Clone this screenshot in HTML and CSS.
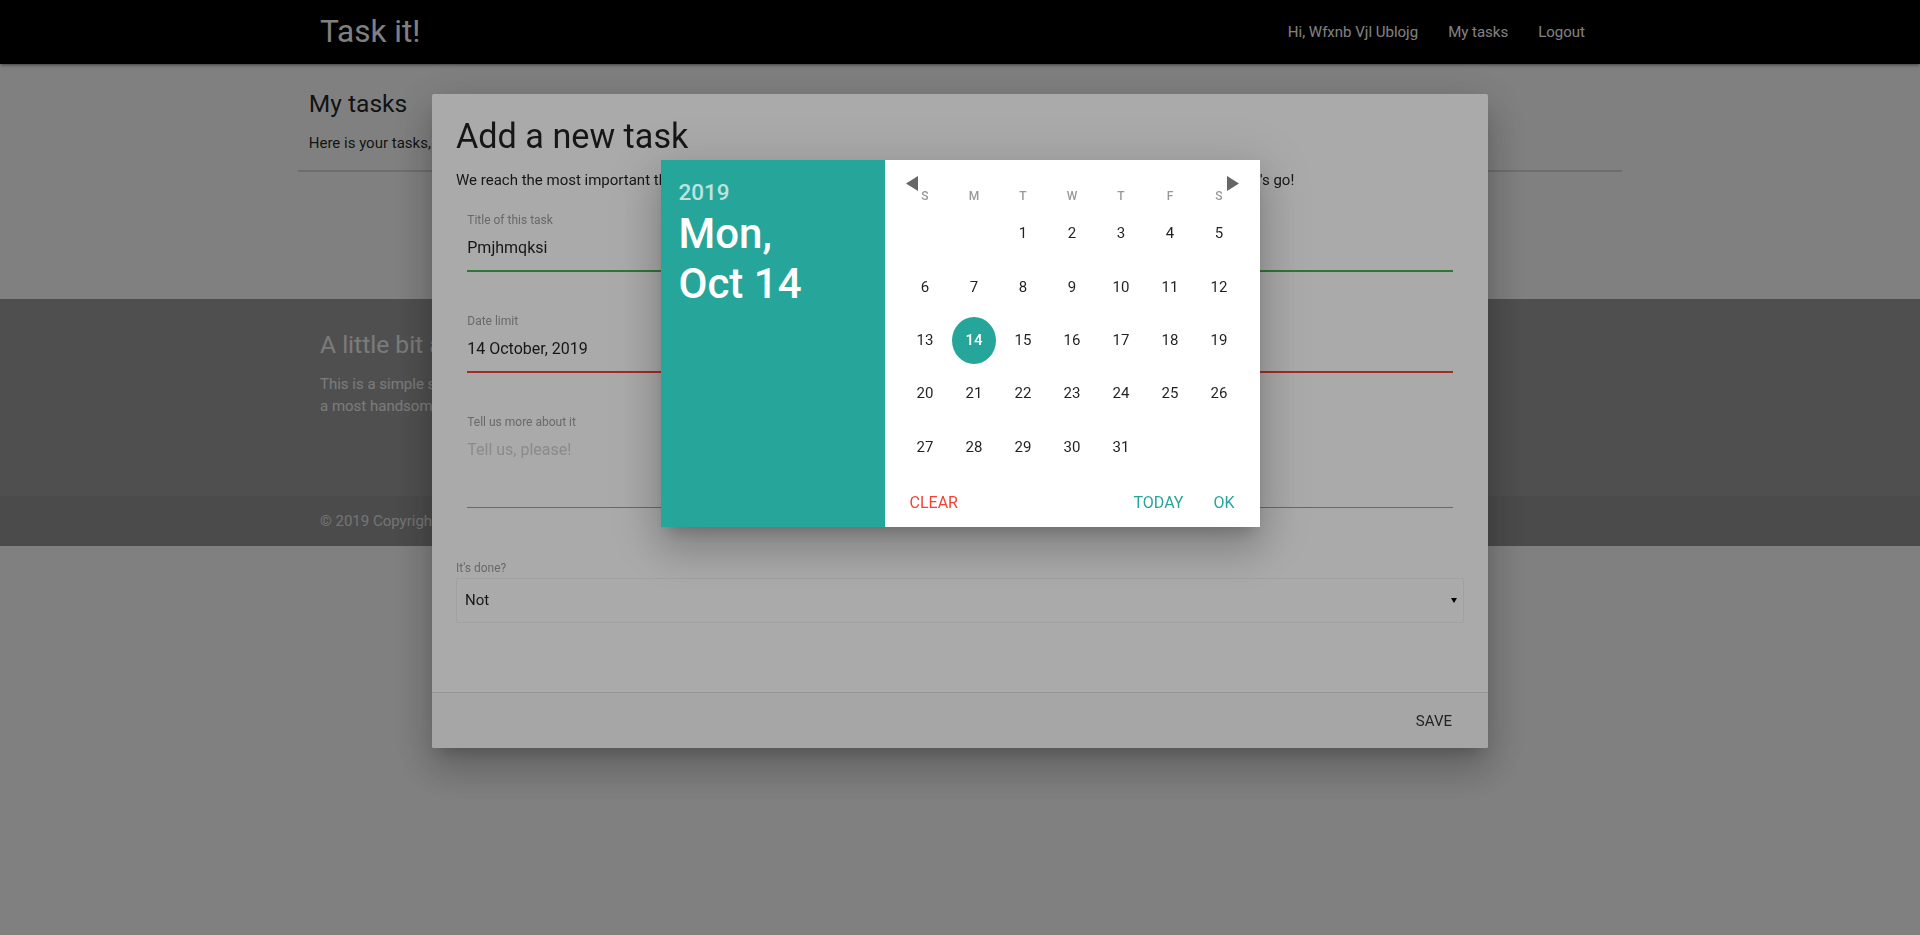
FILE: index.html
```html
<!DOCTYPE html>
<html lang="en">
<head>
<meta charset="utf-8">
<title>Task it!</title>
<link rel="stylesheet" href="styles.css">
</head>
<body>
<nav class="navbar">
  <div class="container nav-wrap">
    <a class="brand" href="#">Task it!</a>
    <ul class="nav-links">
      <li><a href="#">Hi, Wfxnb Vjl Ublojg</a></li>
      <li><a href="#">My tasks</a></li>
      <li><a href="#">Logout</a></li>
    </ul>
  </div>
</nav>

<main class="container main">
  <div class="page-head">
    <h5 class="title">My tasks</h5>
    <p class="subtitle">Here is your tasks, keep them under control and finish them all before the date limit.</p>
  </div>
  <hr class="divider">
</main>

<footer class="page-footer">
  <div class="container footer-body">
    <h5 class="footer-title">A little bit about this app</h5>
    <p class="footer-text">This is a simple system for managing your daily tasks, made with a lot of love by<br>a most handsome developer, just for fun.</p>
  </div>
  <div class="footer-copyright">
    <div class="container">© 2019 Copyright Task it!</div>
  </div>
</footer>

<div class="overlay overlay-1"></div>

<div class="modal">
  <div class="modal-content">
    <h4 class="modal-title">Add a new task</h4>
    <p class="lead">We reach the most important thing of your day: the tasks. Write it down here, give it a date and start doing something! Let's go!</p>
    <div class="field">
      <label class="field-label">Title of this task</label>
      <div class="field-input valid">Pmjhmqksi</div>
    </div>
    <div class="field">
      <label class="field-label">Date limit</label>
      <div class="field-input invalid">14 October, 2019</div>
    </div>
    <div class="field field-area">
      <label class="field-label">Tell us more about it</label>
      <div class="field-textarea"><span class="placeholder">Tell us, please!</span></div>
    </div>
    <label class="select-label">It's done?</label>
    <div class="select-box">
      <span>Not</span>
      <svg class="select-arrow" width="6" height="6" viewBox="0 0 6 6"><polygon points="0,1 6,1 3,6" fill="#000"/></svg>
    </div>
  </div>
  <div class="modal-footer">
    <a class="btn-flat" href="#">Save</a>
  </div>
</div>

<div class="overlay overlay-2"></div>

<div class="datepicker">
  <div class="date-display">
    <span class="year-text">2019</span>
    <span class="date-text">Mon,</span>
    <span class="date-text">Oct 14</span>
  </div>
  <div class="cal">
    <div class="controls">
      <svg width="12" height="15" viewBox="0 0 12 15"><polygon points="12,0 12,15 0,7.5" fill="#666"/></svg>
      <svg width="12" height="15" viewBox="0 0 12 15"><polygon points="0,0 0,15 12,7.5" fill="#666"/></svg>
    </div>
    <div class="dow">
      <span>S</span><span>M</span><span>T</span><span>W</span><span>T</span><span>F</span><span>S</span>
    </div>
    <div class="days">
      <span class="day"></span><span class="day"></span><span class="day">1</span><span class="day">2</span><span class="day">3</span><span class="day">4</span><span class="day">5</span>
      <span class="day">6</span><span class="day">7</span><span class="day">8</span><span class="day">9</span><span class="day">10</span><span class="day">11</span><span class="day">12</span>
      <span class="day">13</span><span class="day selected"><span class="sel-circle">14</span></span><span class="day">15</span><span class="day">16</span><span class="day">17</span><span class="day">18</span><span class="day">19</span>
      <span class="day">20</span><span class="day">21</span><span class="day">22</span><span class="day">23</span><span class="day">24</span><span class="day">25</span><span class="day">26</span>
      <span class="day">27</span><span class="day">28</span><span class="day">29</span><span class="day">30</span><span class="day">31</span><span class="day"></span><span class="day"></span>
    </div>
    <div class="dp-footer">
      <span class="dp-btn dp-clear">Clear</span>
      <span class="dp-btn dp-today">Today</span>
      <span class="dp-btn dp-ok">Ok</span>
    </div>
  </div>
</div>
</body>
</html>
```

FILE: styles.css
```css
* { box-sizing: border-box; }

html, body { margin: 0; padding: 0; }

body {
  font-family: Roboto, "Noto Sans", "Liberation Sans", sans-serif;
  font-size: 15px;
  line-height: 1.5;
  color: rgba(0, 0, 0, 0.87);
  background: #fff;
  min-height: 935px;
}

a { text-decoration: none; color: inherit; }

.container {
  width: 1280px;
  margin: 0 auto;
}

/* ---------- navbar ---------- */
.navbar {
  height: 64px;
  background: #000;
  position: relative;
  box-shadow: 0 2px 2px 0 rgba(0,0,0,0.14), 0 3px 1px -2px rgba(0,0,0,0.12), 0 1px 5px 0 rgba(0,0,0,0.2);
}
.nav-wrap {
  display: flex;
  justify-content: space-between;
  align-items: center;
  height: 64px;
}
.brand {
  font-size: 31.5px;
  line-height: 64px;
  color: #fff;
}
.nav-links {
  display: flex;
  list-style: none;
  margin: 0;
  padding: 0;
}
.nav-links a {
  display: block;
  padding: 0 15px;
  line-height: 64px;
  font-size: 15px;
  color: #fff;
}

/* ---------- main ---------- */
.main { padding-top: 26.4px; }
.page-head { margin: 0 -11.25px; }
.title {
  font-size: 24.6px;
  line-height: 1.1;
  font-weight: 400;
  margin: 0 0 9.84px;
}
.subtitle {
  margin: 15px 0;
  white-space: nowrap;
}
.divider {
  margin: 0 -22px;
  border: 0;
  height: 2px;
  background: #dcdcdc;
}

/* ---------- footer ---------- */
.page-footer {
  margin-top: 127px;
  background: #9e9e9e;
  color: #fff;
}
.footer-body {
  height: 197px;
  padding-top: 31.6px;
}
.footer-title {
  font-size: 24.6px;
  line-height: 1.1;
  font-weight: 400;
  margin: 0 0 15px;
  color: #f5f5f5;
}
.footer-text {
  margin: 0;
  color: #f5f5f5;
}
.footer-copyright {
  height: 50px;
  display: flex;
  align-items: center;
  background: rgba(51, 51, 51, 0.08);
  color: rgba(255, 255, 255, 0.8);
}

/* ---------- overlays ---------- */
.overlay {
  position: fixed;
  top: 0; left: 0; right: 0; bottom: 0;
}
.overlay-1 { background: rgba(0, 0, 0, 0.247); z-index: 10; }
.overlay-2 { background: rgba(0, 0, 0, 0.333); z-index: 12; }

/* ---------- modal ---------- */
.modal {
  position: fixed;
  z-index: 11;
  top: 10%;
  left: 0;
  right: 0;
  margin: 0 auto;
  width: 55%;
  height: 70%;
  background: #fff;
  border-radius: 2px;
  display: flex;
  flex-direction: column;
  box-shadow: 0 24px 38px 3px rgba(0,0,0,0.14), 0 9px 46px 8px rgba(0,0,0,0.12), 0 11px 15px -7px rgba(0,0,0,0.2);
}
.modal-content {
  flex: 1;
  padding: 24px;
  overflow: hidden;
}
.modal-title {
  font-size: 34.2px;
  line-height: 37.62px;
  font-weight: 400;
  margin: 0 0 13.68px;
}
.lead {
  margin: 0 0 20.7px;
  line-height: 22.5px;
  white-space: nowrap;
}
.field {
  padding: 0 11.25px;
  margin-bottom: 42px;
}
.field-label, .select-label {
  display: block;
  font-size: 12px;
  line-height: 17px;
  margin-bottom: -4px;
  color: #9e9e9e;
}
.field-input {
  height: 46px;
  line-height: 45px;
  font-size: 16px;
  border-bottom: 1px solid #9e9e9e;
}
.field-input.valid {
  border-bottom-color: #4caf50;
  box-shadow: 0 1px 0 0 #4caf50;
}
.field-input.invalid {
  border-bottom-color: #f44336;
  box-shadow: 0 1px 0 0 #f44336;
}
.field-area { margin-bottom: 52px; }
.field-textarea {
  height: 81px;
  padding: 13px 0 12px;
  font-size: 16px;
  line-height: 19px;
  border-bottom: 1px solid #9e9e9e;
}
.placeholder { color: #d1d1d1; }
.select-label { margin-bottom: 1px; }
.select-box {
  height: 45px;
  border: 1px solid #f2f2f2;
  border-radius: 2px;
  background: rgba(255, 255, 255, 0.9);
  padding: 0 6px 0 8px;
  display: flex;
  align-items: center;
  justify-content: space-between;
  font-size: 15px;
}
.select-arrow { display: block; }

.modal-footer {
  height: 56px;
  flex: none;
  border-top: 1px solid rgba(0, 0, 0, 0.1);
  background: #fafafa;
  padding: 4px 6px;
  text-align: right;
  border-radius: 0 0 2px 2px;
}
.btn-flat {
  display: inline-block;
  height: 36px;
  line-height: 36px;
  margin: 6px 0;
  padding: 0 30px;
  font-size: 15px;
  text-transform: uppercase;
  color: #343434;
}

/* ---------- datepicker ---------- */
.datepicker {
  position: fixed;
  z-index: 13;
  top: 160px;
  left: 0;
  right: 0;
  margin: 0 auto;
  width: 599px;
  height: 367px;
  display: flex;
  background: #fff;
  box-shadow: 0 24px 38px 3px rgba(0,0,0,0.14), 0 9px 46px 8px rgba(0,0,0,0.12), 0 11px 15px -7px rgba(0,0,0,0.2);
}
.date-display {
  width: 224px;
  flex: none;
  background: #26a69a;
  color: #fff;
  padding: 20px 18px;
  font-weight: 500;
}
.year-text {
  display: block;
  font-size: 22.5px;
  line-height: 25px;
  margin-bottom: 4px;
  color: rgba(255, 255, 255, 0.7);
}
.date-text {
  display: block;
  font-size: 42px;
  line-height: 50px;
  white-space: nowrap;
}
.cal {
  flex: 1;
  padding: 16px 16px 0;
  display: flex;
  flex-direction: column;
}
.controls {
  height: 15px;
  display: flex;
  justify-content: space-between;
  padding: 0 5px;
}
.controls svg { display: block; }
.dow, .days {
  display: grid;
  grid-template-columns: repeat(7, 49px);
}
.dow {
  height: 16px;
  font-size: 12px;
  line-height: 10px;
  color: #999;
  font-weight: 500;
  text-align: center;
}
.days { grid-auto-rows: 53.3px; }
.day {
  display: flex;
  align-items: center;
  justify-content: center;
  font-size: 15px;
}
.sel-circle {
  width: 44px;
  height: 47px;
  border-radius: 50%;
  background: #26a69a;
  color: #fff;
  font-weight: 500;
  display: flex;
  align-items: center;
  justify-content: center;
}
.dp-footer {
  margin-top: 12px;
  height: 36px;
  line-height: 36px;
  display: flex;
  padding: 0 10px;
  margin-left: -16px;
  margin-right: -16px;
}
.dp-btn {
  padding: 0 15px;
  font-size: 16px;
  text-transform: uppercase;
  color: #26a69a;
}
.dp-clear { color: #f44336; }
.dp-today { margin-left: auto; }
```
